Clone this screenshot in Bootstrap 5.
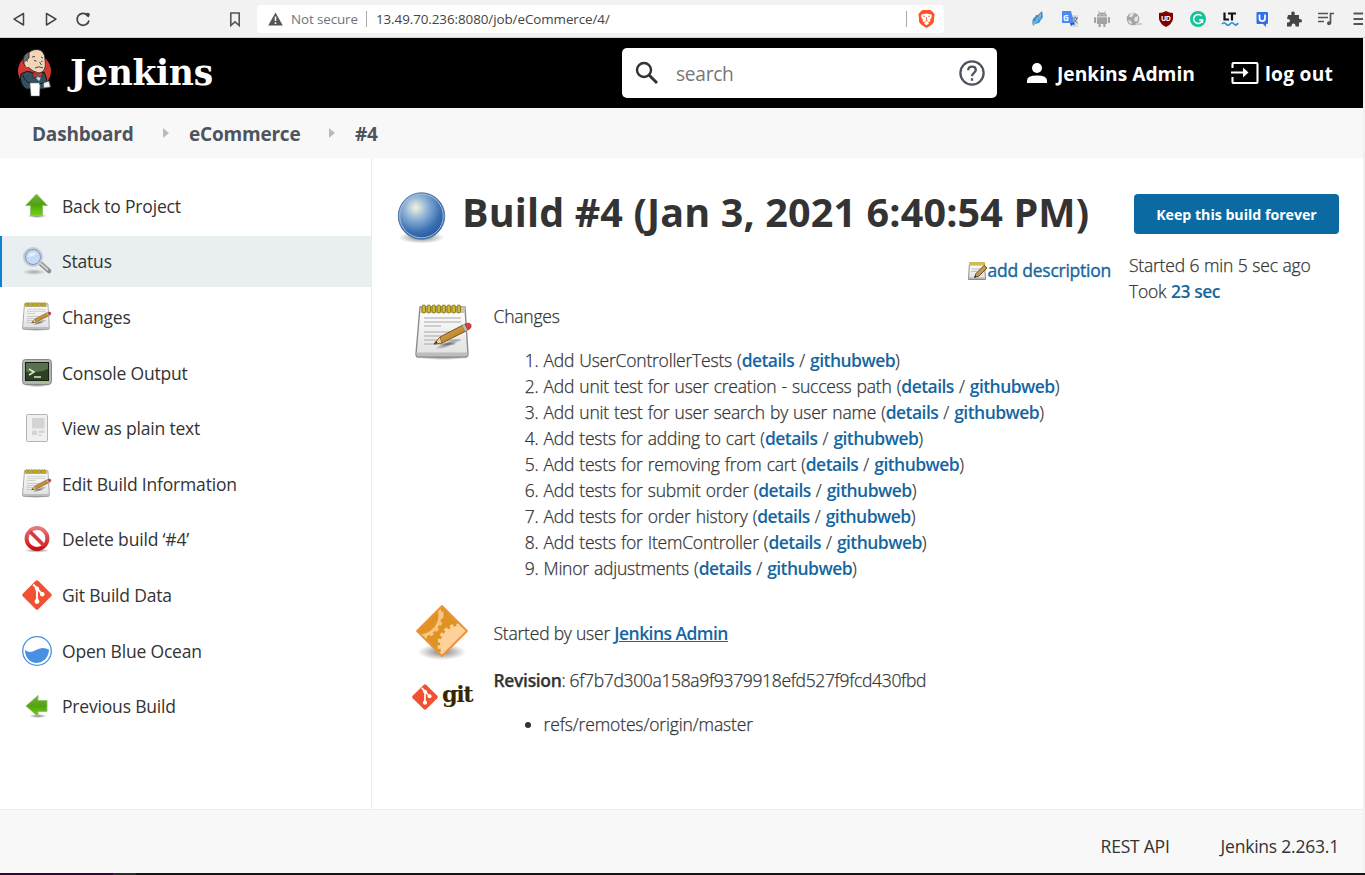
<!DOCTYPE html>
<html lang="en">
<head>
<meta charset="utf-8">
<meta name="viewport" content="width=device-width, initial-scale=1">
<title>eCommerce #4 [Jenkins]</title>
<link href="https://cdn.jsdelivr.net/npm/bootstrap@5.3.0/dist/css/bootstrap.min.css" rel="stylesheet">
<style>
  html, body { height: 875px; overflow: hidden; }
  body { font-family: "Open Sans", "Noto Sans", sans-serif; font-size: 17.5px; line-height: 26px; color: #333; background: #fff; }
  svg { display: block; flex: none; overflow: visible; }
  a { color: #1566a0; font-weight: 600; text-decoration: none; letter-spacing: -.55px; }
  .chrome { height: 38px; background: #f2f2f2; border-bottom: 1px solid #d0d0d0; color: #444; font-size: 13.4px; padding-left: 11px; }
  .nav-btns { width: 246px; gap: 16px; }
  .address { width: 687px; height: 28px; border-radius: 4px; background: #fff; padding: 0 9px 0 11px; letter-spacing: -.1px; }
  .address .vr { opacity: 1; background: #aaa; width: 1px; min-height: 0; height: 16px; align-self: center; }
  .pageurl { margin-left: 1px; letter-spacing: -.07px; }
  .ext { gap: 16px; margin-left: 86px; }
  .scroller { border-right: 2px solid #f1f1f1; height: 835px; }
  .topbar { height: 70px; background: #000; color: #fff; font-weight: 700; font-size: 19.2px; padding-left: 17px; padding-right: 29px; }
  .topbar span { padding-top: 2px; }
  .brandname { font: 700 34.5px/40px "DejaVu Serif", serif; margin-left: 18px; letter-spacing: -.3px; padding: 0 !important; }
  .searchbox { width: 375px; height: 50px; background: #fff; border-radius: 5px; padding: 0 12px 0 13px; color: #777; font-weight: 400; font-size: 19.2px; letter-spacing: -.3px; }
  .crumbs { height: 50px; background: #f8f8f8; font-size: 19px; font-weight: 700; color: #4d545d; padding-left: 32px; letter-spacing: -.2px; }
  .crumbs span { padding-top: 2px; }
  .side { width: 372px; border-right: 1px solid #ececec; padding-top: 22.4px; gap: 4.6px; letter-spacing: -.18px; }
  .task { height: 51px; padding-left: 22px; gap: 10px; color: #333; }
  .task.current { background: #e9eff1; border-left: 2px solid #0b83d0; padding-left: 20px; }
  .main-area { padding: 30px 24px 0 24px; }
  h1 { font-size: 39.5px; line-height: 50px; font-weight: 700; margin: -1px 0 1px; white-space: nowrap; letter-spacing: .14px; }
  .keep { width: 205px; height: 40px; background: #0b6aa2; color: #fff; font-size: 14.2px; font-weight: 700; border-radius: 4px; margin-top: 6px; padding: 1px 0 0; letter-spacing: -.02px; }
  .details { font-weight: 300; white-space: nowrap; letter-spacing: -.22px; -webkit-text-stroke: .25px #333; }
  .details a { -webkit-text-stroke: 0; }
  .details b { font-weight: 600; }
  .adddesc { letter-spacing: -.25px; font-weight: 400; }
  .details a.descline { -webkit-text-stroke: .35px #1566a0; }
  .pic { width: 97.5px; padding-left: 18px; }
  ol, ul { padding-left: 50px; word-spacing: .8px; }
  .rev { letter-spacing: -.34px; }
  .foot { height: 64px; background: #f8f8f8; border-top: 1px solid #eaeeee; padding: 8px 24px 0 0; gap: 51px; letter-spacing: -.22px; }
  .taskbar { height: 2px; background: linear-gradient(90deg,#36033c 0 113px,#2d2930 113px 136px,#171416 136px); }
  .gitword { font: 700 22.5px/24px "DejaVu Serif", serif; color: #362701; letter-spacing: -1.5px; margin-top: -5px; -webkit-text-stroke: 0; }
</style>
</head>
<body>
<svg width="0" height="0" class="position-absolute" aria-hidden="true">
  <defs>
    <linearGradient id="green" x2="0" y2="1"><stop stop-color="#78ae49"/><stop offset=".5" stop-color="#50a40d"/><stop offset="1" stop-color="#73d216"/></linearGradient>
    <linearGradient id="paper" x2="0" y2="1"><stop stop-color="#fff"/><stop offset="1" stop-color="#e0e0e0"/></linearGradient>
    <linearGradient id="redg" x2="0" y2="1"><stop stop-color="#e67a7a"/><stop offset="1" stop-color="#cc0d12"/></linearGradient>
    <linearGradient id="pencil" x2="1" y2="1"><stop stop-color="#eabb60"/><stop offset="1" stop-color="#a36b12"/></linearGradient>
    <radialGradient id="ball" cx=".38" cy=".32" r=".7"><stop stop-color="#f2f4dc"/><stop offset=".35" stop-color="#91b3d8"/><stop offset=".75" stop-color="#3b70b3"/><stop offset="1" stop-color="#285a9d"/></radialGradient>
    <radialGradient id="shade"><stop stop-color="#000" stop-opacity=".5"/><stop offset="1" stop-color="#000" stop-opacity="0"/></radialGradient>
    <symbol id="notes" viewBox="0 0 58 58">
      <ellipse cx="28" cy="53" rx="27" ry="3" fill="url(#shade)"/>
      <path d="M5 3H50L53 50Q53 53 50 53H3Q1 53 1 50Z" fill="url(#paper)" stroke="#8c8c8c" stroke-width="1.4"/>
      <path d="M1.500 48.500H52.500V52H2Z" fill="#bdbdbd"/><path d="M6 3H50V9H5Z" fill="#c6c6be"/>
      <path d="M9 14H46M9 18H46M9 22H26M9 28H46M9 32H41M9 36H46M9 40H40" stroke="#a9a9a9"/>
      <g fill="#d1b72b" stroke="#857013" stroke-width=".9"><rect x="7" y="1" width="3.600" height="8" rx="1.800"/><rect x="12" y="1" width="3.600" height="8" rx="1.800"/><rect x="17" y="1" width="3.600" height="8" rx="1.800"/><rect x="22" y="1" width="3.600" height="8" rx="1.800"/><rect x="27" y="1" width="3.600" height="8" rx="1.800"/><rect x="32" y="1" width="3.600" height="8" rx="1.800"/><rect x="37" y="1" width="3.600" height="8" rx="1.800"/><rect x="42" y="1" width="3.600" height="8" rx="1.800"/></g>
      <ellipse cx="33" cy="40" rx="14" ry="3" fill="url(#shade)" transform="rotate(-20 33 40)"/>
      <path d="M19 40L25 33L48 21L51 27L27 39Z" fill="url(#pencil)" stroke="#7a5416"/><path d="M19 40L25 33L27 39Z" fill="#efd3a0" stroke="#7a5416" stroke-width=".7"/><path d="M19 40L21.500 37L22.500 39Z" fill="#222"/>
      <path d="M47 21.500L50 20L53 26L50 27.500Z" fill="#bbb" stroke="#777" stroke-width=".5"/><path d="M50 20Q55 18 56 21Q57 24 53 26Z" fill="#e8363b" stroke="#8b3a2e" stroke-width=".8"/>
    </symbol>
    <symbol id="notes-small" viewBox="0 0 20 20">
      <path d="M1.500 2H16.500L17.500 18.500H.5Z" fill="url(#paper)" stroke="#8c8c8c"/><path d="M1 16.500H17V18H1Z" fill="#b5b5b5"/>
      <path d="M1 1.500H17V4.500H1Z" fill="#c9ad24"/><path d="M2 2V4M5 2V4M8 2V4M11 2V4M14 2V4" stroke="#f2e07a"/>
      <path d="M3.500 8H12M3.500 10.500H9" stroke="#bbb"/>
      <path d="M6.500 16.500L8 12.500L16 4.500L19 7L11 15Z" fill="#c39a55" stroke="#5c4420" stroke-width=".9"/><path d="M6.500 16.500L7.200 14.200L8.700 15.600Z" fill="#222"/>
    </symbol>
    <symbol id="gitmark" viewBox="0 0 30 30">
      <path d="M13.700.8Q15-.3 16.300.8L29.200 13.700Q30.300 15 29.200 16.300L16.300 29.200Q15 30.300 13.700 29.200L.8 16.300Q-.3 15 .8 13.700Z" fill="#f05133"/>
      <path d="M11.200 4.500L15 8.500V21.500M15.500 9L20 13.800" fill="none" stroke="#fff" stroke-width="1.900"/><circle cx="15" cy="8.700" r="2.200" fill="#fff"/><circle cx="15" cy="21.500" r="2.400" fill="#fff"/><circle cx="20.300" cy="14.200" r="2.300" fill="#fff"/>
    </symbol>
  </defs>
</svg>

<div class="chrome d-flex align-items-center">
  <div class="nav-btns d-flex align-items-center">
    <svg width="16" height="16" fill="none" stroke="#444" stroke-width="1.500" stroke-linejoin="round"><path d="M12.500 2.500V14L3 8.200Z"/></svg>
    <svg width="16" height="16" fill="none" stroke="#444" stroke-width="1.500" stroke-linejoin="round"><path d="M3.500 2.500V14L13 8.200Z"/></svg>
    <svg width="16" height="16" fill="none" stroke="#444" stroke-width="1.700"><path d="M12.500 4.200A6 6 0 1 0 14 9.500"/><path d="M10 2.500H14V6.500Z" fill="#444" stroke="none"/><circle cx="12.800" cy="3.800" r="2" fill="#444" stroke="none"/></svg>
    <svg width="12" height="16" class="ms-auto me-3" fill="none" stroke="#555" stroke-width="1.600"><path d="M1.800 2H10.200V14.500L6 10.800L1.800 14.500Z"/></svg>
  </div>
  <div class="address d-flex align-items-center">
    <svg width="15" height="14"><path d="M7.500.5L14.800 13.500H.2Z" fill="#555"/><path d="M7.500 4.500V9M7.500 10.200V12" stroke="#fff" stroke-width="1.600"/></svg>
    <span class="ms-2 text-nowrap text-secondary">Not secure</span>
    <span class="vr ms-2 me-2"></span><span class="pageurl text-nowrap">13.49.70.236:8080/job/eCommerce/4/</span>
    <span class="vr ms-auto"></span>
    <svg width="17" height="18" style="margin-left:11px"><path d="M4.500 0H12.500L14.500 1.800L16.500 4L15.800 12Q15 14.500 8.500 18Q2 14.500 1.200 12L.5 4L2.500 1.800Z" fill="#fb542b"/><path d="M8.500 3.500L13.500 4.500L13.800 7L12 10L12.500 11.500L10 12L11 13.500L8.500 15.300L6 13.500L7 12L4.500 11.500L5 10L3.200 7L3.500 4.500Z" fill="#fff"/><path d="M5 6L7 6.500M12 6L10 6.500M8.500 7V10M7 11.300L8.500 10.500L10 11.300" stroke="#fb542b" fill="none" stroke-width=".8"/></svg>
  </div>
  <div class="ext d-flex align-items-center">
    <svg width="16" height="16"><path d="M3 15Q1 8 5 6L6 4L8 4L12 0Q14 7 11 9L9 12L5 13Z" fill="#4391c6"/><path d="M3 15L11 3M4 10V13M7 7V11M10 4V9" stroke="#a3cdea" fill="none" stroke-width=".8"/></svg>
    <svg width="16" height="16"><path d="M6 4H16V16H9Z" fill="#ddd"/><path d="M0 0H9L13 15L9 12H0Z" fill="#4c8bf5"/><path d="M8 12H13L9 15Z" fill="#2456bd"/><text x="1" y="9.500" font-size="8" font-weight="700" fill="#fff">G</text><path d="M10.500 7H16M13 5.500V7M15 7Q14 11 11 12M12 8Q13 11 15.500 12" stroke="#607d8b" fill="none"/></svg>
    <svg width="16" height="16" fill="#a3a3a3"><path d="M3 5.500Q3 1.500 8 1.500Q13 1.500 13 5.500ZM3 6.200H13V13H11.500V16H9.300V13H6.700V16H4.500V13H3ZM0 6.200H2.100V12H0ZM13.900 6.200H16V12H13.900Z"/><path d="M4.500 0L6 3M11.500 0L10 3" stroke="#a3a3a3" stroke-width=".8"/><circle cx="6" cy="3.800" r=".6" fill="#fff"/><circle cx="10" cy="3.800" r=".6" fill="#fff"/></svg>
    <svg width="16" height="16"><circle cx="7" cy="8" r="6.300" fill="#a5a5a5"/><path d="M4 3Q7 1 8 3L6 6L3 6ZM9 6L12 5V9L10 11L8 9ZM2 9L5 10L6 13Q3 13 2 9Z" fill="#e4e4e4"/><path d="M10 12H16V14H10Z" fill="#ccc"/></svg>
    <svg width="16" height="16"><path d="M8 0Q11 1.800 15 2V8Q14 13 8 16Q2 13 1 8V2Q5 1.800 8 0Z" fill="#800000"/><text x="3" y="10.300" font-size="7" font-weight="700" fill="#fff" letter-spacing="-.5">UD</text></svg>
    <svg width="16" height="16"><circle cx="8" cy="8" r="8" fill="#15c39a"/><path d="M11.500 5A4.500 4.500 0 1 0 12.500 9H9.200M12.500 8.500V12" fill="none" stroke="#fff" stroke-width="1.500"/></svg>
    <svg width="16" height="16"><path d="M2.500 1.500V8.500H7M6 2.500H14M10 2.500V9.500" stroke="#111" stroke-width="2.200" fill="none"/><path d="M0 13Q2 10.500 4 13T8 13T12 13T16 12" stroke="#1991d4" stroke-width="1.700" fill="none"/></svg>
    <svg width="16" height="16"><path d="M3.500 1H13Q14 1 14 2V12Q14 13 13 13H12V16L9 13H3.500Q2.500 13 2.500 12V2Q2.500 1 3.500 1Z" fill="#2f6fed"/><path d="M5.500 3.500V7.500Q5.500 10 8.200 10Q11 10 11 7.500V3.500" fill="none" stroke="#fff" stroke-width="1.700"/></svg>
    <svg width="16" height="16"><path d="M2 4H5.500Q4.500 .5 7 .5Q9.500 .5 8.500 4H13V8Q16 7.500 16 10Q16 12 13 11.500V15.500H9.500Q9.500 12.500 7.500 12.500T5.500 15.500H1V11.500Q4 12 4 9.800T1 8Z" fill="#454545"/></svg>
    <svg width="16" height="16" fill="none" stroke="#555" stroke-width="1.700"><path d="M0 2.500H10M0 6.500H10M0 10.500H6M12.500 12.500V2.500H16"/><circle cx="11" cy="12.300" r="2" fill="#555" stroke="none"/></svg>
    <svg width="10" height="16" stroke="#555" stroke-width="1.800"><path d="M3.500 2.500H13M3.500 8H13M3.500 13H13"/></svg>
  </div>
</div>

<div class="scroller d-flex flex-column">
  <header class="topbar d-flex align-items-center">
    <svg width="35" height="48">
      <circle cx="17.500" cy="22" r="16.500" fill="#d33833"/>
      <path d="M4 25Q10 21 14 23L19 27L27 23Q31 29 29 37L27 40H9Q2 35 4 25Z" fill="#335061" stroke="#111"/>
      <path d="M17 25L24 24L22 32Z" fill="#81b0c4"/><path d="M16 23L20 25.500L25 22V28.500L20.500 27L16 29Z" fill="#d33833" stroke="#111" stroke-width=".5"/>
      <path d="M19 29L24 28.500L22 32Z" fill="#c3dbe6"/>
      <path d="M9 8Q12 .5 20 .5Q28 1 28 11Q30 23 22 24Q16 23 11 18Z" fill="#f0d6b7" stroke="#222" stroke-width=".8"/>
      <path d="M12 3Q6 5 6 13L8 17L10 13Q9 10 12 9Z" fill="#6d6b6d" stroke="#222" stroke-width=".8"/>
      <path d="M9 12Q6 14 9.500 18L12 18L12 13Z" fill="#f0d6b7"/>
      <path d="M15 8L18 7.500M24 8L26 9M17 11.500L19.500 12M24 12L25.500 12.500M22.500 13L24.500 16M18 19Q22 16.500 26 19" fill="none" stroke="#333" stroke-width=".9"/>
      <path d="M13 34H23L22.500 47L14 47Z" fill="#fff" stroke="#777" stroke-width=".5"/><path d="M26 34L32 32L33.500 38L27 39Z" fill="#eee" stroke="#555" stroke-width=".7"/>
      <path d="M6 26Q8 33 13 34M22 35L27 34" stroke="#111" fill="none" stroke-width=".8"/>
    </svg>
    <span class="brandname">Jenkins</span>
    <div class="searchbox d-flex align-items-center ms-auto">
      <svg width="24" height="24" fill="none" stroke="#333" stroke-width="2.400"><circle cx="9" cy="9" r="7"/><path d="M14 14L22 22" stroke-width="3"/></svg>
      <span style="margin-left:17px">search</span>
      <svg width="26" height="26" class="ms-auto" fill="none" stroke="#4d545d" stroke-width="2.300"><circle cx="13" cy="13" r="11.600"/><path d="M9.200 10.300Q9.200 6.700 13 6.700T16.800 10Q16.800 11.300 15 12.800Q13 14.300 13 16.300M13 18.300V20.700"/></svg>
    </div>
    <div class="d-flex align-items-center text-nowrap" style="margin-left:30px">
      <svg width="20" height="20" fill="#fff"><circle cx="10" cy="5" r="5"/><path d="M0 20V17.500Q0 12.500 10 12.500T20 17.500V20Z"/></svg>
      <span style="margin-left:10px;width:138px">Jenkins Admin</span>
      <svg width="29" height="24" style="margin-left:35px" fill="none" stroke="#fff" stroke-width="2.100"><path d="M2.500 7V3Q2.500 2 3.500 2H26.500Q27.500 2 27.500 3V21Q27.500 22 26.500 22H3.500Q2.500 22 2.500 21V16M1 11.500H16"/><path d="M13 6.500L18.500 11.500L13 16.500Z" fill="#fff" stroke="none"/></svg>
      <span style="margin-left:6px;width:69px;letter-spacing:.25px">log out</span>
    </div>
  </header>
  <nav class="crumbs d-flex align-items-center">
    <span style="width:131px">Dashboard</span><svg width="6" height="10" fill="#bbb"><path d="M0 0L6 5L0 10Z"/></svg>
    <span style="margin-left:20px;width:140px">eCommerce</span><svg width="6" height="10" fill="#bbb"><path d="M0 0L6 5L0 10Z"/></svg>
    <span style="margin-left:20px">#4</span>
  </nav>
  <div class="d-flex flex-grow-1">
    <aside class="side d-flex flex-column flex-shrink-0">
      <div class="task d-flex align-items-center"><svg width="30" height="30"><ellipse cx="15" cy="25" rx="10" ry="2" fill="url(#shade)"/><path d="M14.500 3L25.500 14.500H20.500V24.500H8.500V14.500H3.500Z" fill="url(#green)" stroke="#8cc168" stroke-width=".9"/></svg><span>Back to Project</span></div>
      <div class="task current d-flex align-items-center"><svg width="30" height="30"><ellipse cx="12" cy="26" rx="12" ry="3" fill="url(#shade)" opacity=".6"/><path d="M18 17L27 25" stroke="#8e8e8e" stroke-width="4.600" stroke-linecap="round"/><path d="M18 17L26 24" stroke="#d5d5d5" stroke-width="2"/><circle cx="11" cy="11" r="8.700" fill="#c4daf5" stroke="#c9cbce" stroke-width="2.600"/><circle cx="11" cy="11" r="7.500" fill="none" stroke="#7298cd"/><path d="M6 11Q7 5 14 7Q14 10 6 11Z" fill="#fff" opacity=".6"/></svg><span>Status</span></div>
      <div class="task d-flex align-items-center"><svg width="30" height="30"><use href="#notes" width="30" height="30"/></svg><span>Changes</span></div>
      <div class="task d-flex align-items-center"><svg width="30" height="30"><ellipse cx="15" cy="27" rx="14" ry="2" fill="url(#shade)"/><rect x=".5" y="1.500" width="29" height="25" rx="3" fill="#b3b3b0" stroke="#888"/><rect x="3.500" y="4.500" width="23" height="18" fill="#2d4023" stroke="#181f14"/><path d="M4 5H26V11Q16 15 4 14Z" fill="#6d8360" opacity=".7"/><path d="M7 11L12 14L7 17" fill="none" stroke="#d9e9d0" stroke-width="1.500"/><path d="M12 19H19" stroke="#d9e9d0" stroke-width="1.500"/><circle cx="20.500" cy="24.500" r=".8" fill="#8ae234"/></svg><span>Console Output</span></div>
      <div class="task d-flex align-items-center"><svg width="30" height="30"><rect x="4.500" y="1.500" width="21" height="27" rx="1" fill="#f0f0f0" stroke="#b5b5b5"/><path d="M10 5H22.500V15.500H10ZM10 17.500H15V22H10ZM16.500 17.500H22.500V20H16.500ZM16.500 21.500H20V23H16.500Z" fill="#d4d4d4"/></svg><span>View as plain text</span></div>
      <div class="task d-flex align-items-center"><svg width="30" height="30"><use href="#notes" width="30" height="30"/></svg><span>Edit Build Information</span></div>
      <div class="task d-flex align-items-center"><svg width="30" height="30"><ellipse cx="15" cy="26.500" rx="13" ry="2" fill="url(#shade)"/><circle cx="15" cy="14.500" r="10.400" fill="#fff" stroke="url(#redg)" stroke-width="4"/><path d="M8 7.500L22 21.500" stroke="#d53a3e" stroke-width="3.800"/></svg><span>Delete build ‘#4’</span></div>
      <div class="task d-flex align-items-center"><svg width="30" height="30"><use href="#gitmark"/></svg><span>Git Build Data</span></div>
      <div class="task d-flex align-items-center"><svg width="30" height="30"><circle cx="15" cy="15" r="14.300" fill="#fff" stroke="#4a90e2" stroke-width="1.300"/><path d="M3 14Q8 18 15 13.500Q21 10.500 27 13.500Q27 19 23 23.500Q19 27 15 27Q10 27 7 24Q3 20 3 14Z" fill="#4a90e2"/></svg><span>Open Blue Ocean</span></div>
      <div class="task d-flex align-items-center"><svg width="30" height="30"><ellipse cx="16" cy="25" rx="9" ry="2" fill="url(#shade)"/><path d="M4 15L16 4.500V9.500H25V20.500H16V25.500Z" fill="url(#green)" stroke="#8cc168" stroke-width=".9"/></svg><span>Previous Build</span></div>
    </aside>
    <main class="main-area flex-grow-1">
      <div class="d-flex align-items-start">
        <svg width="50" height="54" style="margin-top:3px"><ellipse cx="25.500" cy="46.500" rx="23" ry="6" fill="url(#shade)"/><circle cx="25.500" cy="25" r="23.200" fill="url(#ball)" stroke="#5078ac"/><circle cx="25.500" cy="25" r="21.800" fill="none" stroke="#a6bfdd"/></svg>
        <h1 style="margin-left:16px">Build #4 (Jan 3, 2021 6:40:54 PM)</h1>
        <button class="btn keep ms-auto" type="button">Keep this build forever</button>
      </div>
      <div class="d-flex details justify-content-end" style="margin-top:7px">
        <a href="#" class="descline adddesc d-flex align-items-center" style="height:36px"><svg width="20" height="20"><use href="#notes-small" y="1" width="20" height="20"/></svg><span>add description</span></a>
        <div style="margin-left:18px;width:210px;word-spacing:.4px">Started 6 min 5 sec ago<br>Took <a href="#">23 sec</a></div>
      </div>
      <div class="details d-flex" style="margin-top:-1px">
        <div class="pic"><svg width="58" height="58" viewBox="-1 -1 58 58"><use href="#notes" width="58" height="58"/></svg></div>
        <div><div style="margin-bottom:18px">Changes</div>
          <ol class="mb-0">
            <li>Add UserControllerTests (<a href="#">details</a> / <a href="#">githubweb</a>)</li>
            <li>Add unit test for user creation - success path (<a href="#">details</a> / <a href="#">githubweb</a>)</li>
            <li>Add unit test for user search by user name (<a href="#">details</a> / <a href="#">githubweb</a>)</li>
            <li>Add tests for adding to cart (<a href="#">details</a> / <a href="#">githubweb</a>)</li>
            <li>Add tests for removing from cart (<a href="#">details</a> / <a href="#">githubweb</a>)</li>
            <li>Add tests for submit order (<a href="#">details</a> / <a href="#">githubweb</a>)</li>
            <li>Add tests for order history (<a href="#">details</a> / <a href="#">githubweb</a>)</li>
            <li>Add tests for ItemController (<a href="#">details</a> / <a href="#">githubweb</a>)</li>
            <li>Minor adjustments (<a href="#">details</a> / <a href="#">githubweb</a>)</li>
          </ol>
        </div>
      </div>
      <div class="details d-flex align-items-center" style="margin-top:18px;height:68px">
        <div class="pic" style="padding-left:20px"><svg width="52" height="56"><defs><clipPath id="dia"><path d="M26 1L51 26L26 51L1 26Z"/></clipPath></defs><ellipse cx="26" cy="47" rx="24" ry="8" fill="url(#shade)"/><path d="M26 1L51 26L26 51L1 26Z" fill="#df9325"/><g clip-path="url(#dia)"><circle cx="3" cy="10" r="21" fill="none" stroke="#f8c67f" stroke-width="3"/><circle cx="3" cy="10" r="23" fill="none" stroke="#f8c67f" stroke-width="3" stroke-dasharray="3.500 3.500"/><circle cx="43" cy="40" r="19" fill="#fdd29a"/><circle cx="43" cy="40" r="20" fill="none" stroke="#fdd29a" stroke-width="3" stroke-dasharray="3.500 3"/></g><path d="M26 1L51 26L26 51L1 26Z" fill="none" stroke="#ec933a" stroke-width="1.800" stroke-linejoin="round"/></svg></div>
        <div>Started by user <a href="#" class="text-decoration-underline">Jenkins Admin</a></div>
      </div>
      <div class="details d-flex">
        <div class="pic d-flex align-items-center" style="padding-left:16px;height:58px;gap:4px"><svg width="26" height="26"><use href="#gitmark" y="1" width="26" height="26"/></svg><span class="gitword">git</span></div>
        <div><div class="rev" style="margin-bottom:18px"><b>Revision</b>: 6f7b7d300a158a9f9379918efd527f9fcd430fbd</div><ul class="mb-0" style="letter-spacing:-.14px"><li>refs/remotes/origin/master</li></ul></div>
      </div>
    </main>
  </div>
  <footer class="foot d-flex align-items-center justify-content-end"><span>REST API</span><span>Jenkins 2.263.1</span></footer>
</div>
<div class="taskbar"></div>
<script src="https://cdn.jsdelivr.net/npm/bootstrap@5.3.0/dist/js/bootstrap.bundle.min.js"></script>
</body>
</html>
